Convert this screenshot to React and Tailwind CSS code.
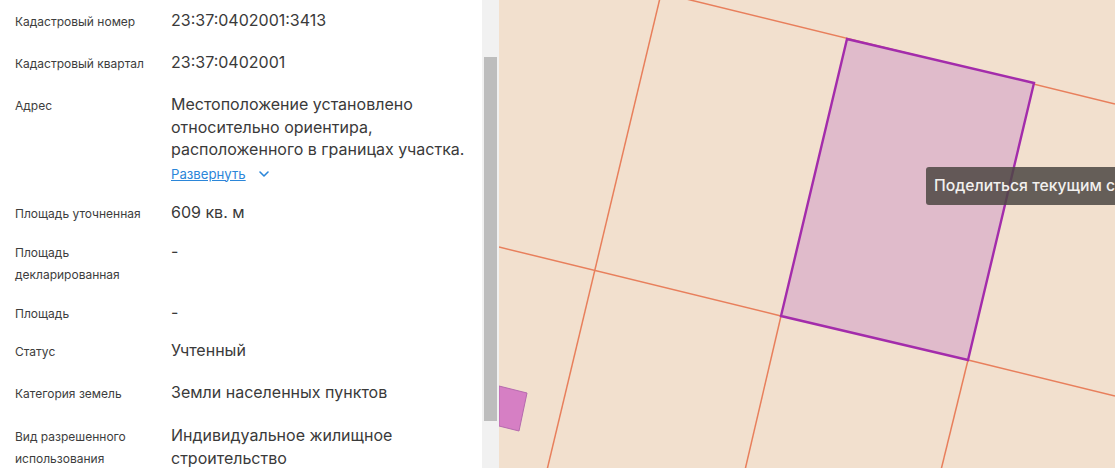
import React from 'react';
import { ChevronDown } from 'lucide-react';

const rows = [
  { label: 'Кадастровый номер', value: ['23:37:0402001:3413'], cls: 'h-[42px]' },
  { label: 'Кадастровый квартал', value: ['23:37:0402001'], cls: 'h-[42px]' },
  {
    label: 'Адрес',
    value: ['Местоположение установлено', 'относительно ориентира,', 'расположенного в границах участка.'],
    more: true,
    cls: 'h-[108px]',
  },
  { label: 'Площадь уточненная', value: ['609 кв. м'], cls: 'h-[39px]' },
  { label: 'Площадь декларированная', value: ['-'], cls: 'h-[61px]' },
  { label: 'Площадь', value: ['-'], cls: 'h-[38px]' },
  { label: 'Статус', value: ['Учтенный'], cls: 'h-[42px]' },
  { label: 'Категория земель', value: ['Земли населенных пунктов'], cls: 'h-[43px]' },
  { label: 'Вид разрешенного использования', value: ['Индивидуальное жилищное', 'строительство'], cls: 'h-[51px]' },
];

const Row = ({ row }) => (
  <div className={`flex shrink-0 ${row.cls}`}>
    <div className="w-[156px] shrink-0 pr-2 pt-[2px] text-[12px] leading-[22px] text-[#3d3d3d]">{row.label}</div>
    <div className="flex-1 text-[16px] leading-[22.5px] text-[#3a3a3a]">
      {row.value.map((line) => (
        <div key={line} className="whitespace-nowrap">{line}</div>
      ))}
      {row.more && (
        <div className="mt-px flex items-center gap-[10px] text-[13.2px] leading-[24px] text-[#2b86d9]">
          <span className="underline">Развернуть</span>
          <ChevronDown size={16} strokeWidth={2.4} />
        </div>
      )}
    </div>
  </div>
);

const MapLayer = () => (
  <svg className="block h-full w-full" viewBox="0 0 616 468" fill="none">
    <g stroke="#e87f5c" strokeWidth="1.5">
      <line x1="161" y1="-2" x2="48" y2="470" />
      <line x1="175" y1="-4" x2="616" y2="104" />
      <line x1="0" y1="247" x2="282" y2="316" />
      <line x1="282" y1="316" x2="246" y2="470" />
      <line x1="469" y1="360" x2="616" y2="396" />
      <line x1="469" y1="360" x2="442" y2="470" />
    </g>
    <path d="M348 39 L535 83 L469 360 L282 316 Z" fill="#e0bbcb" stroke="#a32cab" strokeWidth="2.4" />
    <path d="M0 386 L28 393 L20 431 L0 426 Z" fill="#d67fc4" stroke="#b56aae" strokeWidth="1" />
  </svg>
);

export default function App() {
  return (
    <div className="relative flex h-[468px] w-[1115px] overflow-hidden bg-white font-['Inter',sans-serif]">
      <div className="flex h-full w-[482px] shrink-0 flex-col overflow-hidden pl-[15px] pt-[9px]">
        {rows.map((row) => (
          <Row key={row.label} row={row} />
        ))}
      </div>
      <div className="h-full w-[17px] shrink-0 bg-[#f1f1f1] pt-[57px]">
        <div className="ml-[2px] h-[364px] w-[13px] bg-[#bdbdbd]" />
      </div>
      <div className="h-full flex-1 bg-[#f2e0ce]">
        <MapLayer />
      </div>
      <div className="absolute left-[926px] top-[167px] h-[38px] w-[200px] whitespace-nowrap rounded-[3px] bg-[#4c4743]/85 pl-2 text-[15.75px] font-medium leading-[38px] text-[#f2f0ee]">
        Поделиться текущим с
      </div>
    </div>
  );
}
